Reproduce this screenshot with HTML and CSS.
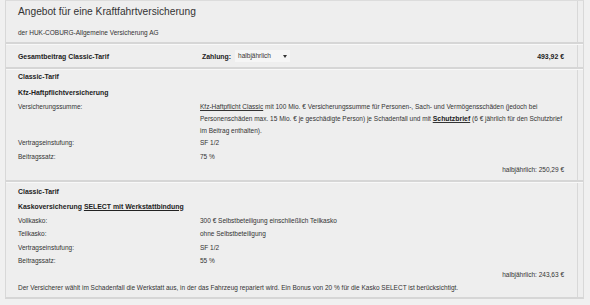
FILE: index.html
```html
<!DOCTYPE html>
<html lang="de">
<head>
    <meta charset="UTF-8">
    <meta name="viewport" content="width=device-width, initial-scale=1.0">
    <title>Angebot Kraftfahrtversicherung</title>
    <link rel="stylesheet" href="styles.css">
</head>
<body>
    <div class="frame">
        <div class="header">
            <h1>Angebot für eine Kraftfahrtversicherung</h1>
            <p class="insurer">der HUK-COBURG-Allgemeine Versicherung AG</p>
        </div>
        <div class="sep"></div>

        <div class="total">
            <div class="label"><strong>Gesamtbeitrag Classic-Tarif</strong></div>
            <div class="payment">
                <strong>Zahlung:</strong>
                <span class="select">halbjährlich<i class="arrow"></i></span>
            </div>
            <div class="amount"><strong>493,92 €</strong></div>
        </div>
        <div class="sep"></div>

        <div class="section first">
            <div class="tariff">Classic-Tarif</div>
            <div class="product">Kfz-Haftpflichtversicherung</div>
            <div class="row multi">
                <div class="label">Versicherungssumme:</div>
                <div class="value">
                    <u>Kfz-Haftpflicht Classic</u> mit 100 Mio. € Versicherungssumme für Personen-, Sach- und Vermögensschäden (jedoch bei<br>
                    Personenschäden max. 15 Mio. € je geschädigte Person) je Schadenfall und mit <u><strong>Schutzbrief</strong></u> (6 € jährlich für den Schutzbrief<br>
                    im Beitrag enthalten).
                </div>
            </div>
            <div class="row">
                <div class="label">Vertragseinstufung:</div>
                <div class="value">SF 1/2</div>
            </div>
            <div class="row">
                <div class="label">Beitragssatz:</div>
                <div class="value">75 %</div>
            </div>
            <div class="subtotal">halbjährlich: 250,29 €</div>
        </div>
        <div class="sep"></div>

        <div class="section second">
            <div class="tariff">Classic-Tarif</div>
            <div class="product">Kaskoversicherung <u>SELECT mit Werkstattbindung</u></div>
            <div class="row">
                <div class="label">Vollkasko:</div>
                <div class="value">300 € Selbstbeteiligung einschließlich Teilkasko</div>
            </div>
            <div class="row">
                <div class="label">Teilkasko:</div>
                <div class="value">ohne Selbstbeteiligung</div>
            </div>
            <div class="row">
                <div class="label">Vertragseinstufung:</div>
                <div class="value">SF 1/2</div>
            </div>
            <div class="row">
                <div class="label">Beitragssatz:</div>
                <div class="value">55 %</div>
            </div>
            <div class="subtotal">halbjährlich: 243,63 €</div>
            <div class="note">Der Versicherer wählt im Schadenfall die Werkstatt aus, in der das Fahrzeug repariert wird. Ein Bonus von 20 % für die Kasko SELECT ist berücksichtigt.</div>
        </div>
    </div>
</body>
</html>
```

FILE: styles.css
```css
body {
    margin: 0;
    background: #f0f0f0;
    font-family: "Liberation Sans", Arial, sans-serif;
    font-size: 6.5px;
    color: #333;
}
.frame {
    margin-left: 5px;
    width: 577px;
    border-top: 1px solid #dcdcdc;
    border-left: 1px solid #d8d8d8;
    border-right: 1px solid #d8d8d8;
    border-bottom: 2px solid #d6d6d6;
    background:
        linear-gradient(to left, transparent 5px, #d8d8d8 5px, #d8d8d8 6px, transparent 6px),
        #eeeeee;
}
.header {
    height: 41px;
    padding: 4px 0 0 12px;
    box-sizing: border-box;
}
h1 {
    margin: 0;
    font-size: 10.2px;
    font-weight: normal;
    line-height: 14px;
    color: #333;
}
.insurer {
    margin: 8px 0 0;
    line-height: 12px;
}
.sep {
    height: 1px;
    border-top: 2px solid #d6d6d6;
    background: #f8f8f8;
}
.total {
    display: flex;
    align-items: center;
    height: 22px;
    padding: 0 19px 0 12px;
}
.total .label {
    width: 184px;
}
.payment {
    display: flex;
    align-items: center;
    gap: 4px;
}
.select {
    position: relative;
    width: 52px;
    height: 12px;
    line-height: 12px;
    padding-left: 3px;
    background: #f5f5f5;
}
.arrow {
    position: absolute;
    right: 3px;
    top: 5px;
    border-left: 2px solid transparent;
    border-right: 2px solid transparent;
    border-top: 3px solid #333;
}
.amount {
    margin-left: auto;
}
strong {
    color: #222;
    font-size: 6.9px;
}
.section {
    padding: 0 19px 3px 12px;
}
.section.second {
    padding-top: 2px;
    padding-bottom: 2px;
}
.tariff, .product {
    font-weight: bold;
    font-size: 6.9px;
    color: #222;
    line-height: 14px;
}
.first .product {
    margin-top: 2px;
}
.second .product {
    margin-top: 1px;
}
.row {
    display: flex;
    line-height: 13.5px;
}
.row .label {
    width: 182px;
    flex-shrink: 0;
}
.row.multi {
    line-height: 12px;
    padding-top: 1px;
    height: 35px;
}
.value {
    white-space: nowrap;
}
.subtotal {
    text-align: right;
    line-height: 13.5px;
}
.note {
    line-height: 13.5px;
}
```
